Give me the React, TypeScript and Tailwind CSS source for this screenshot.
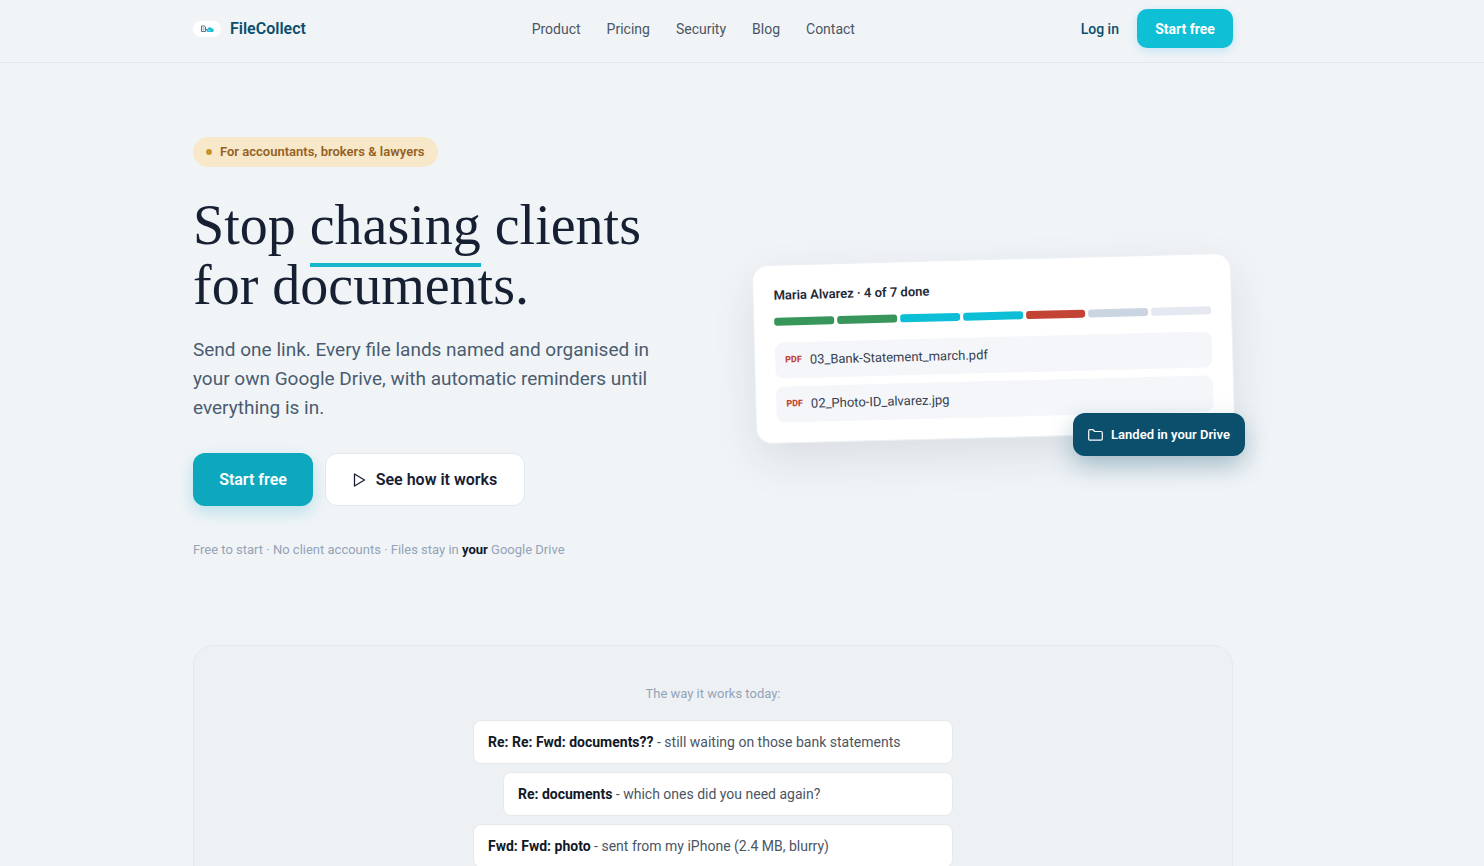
import React from 'react';

interface Email {
  subject: string;
  body: string;
  indent?: boolean;
}

const navLinks = ['Product', 'Pricing', 'Security', 'Blog', 'Contact'];

const segments = [
  'bg-[#38965a]',
  'bg-[#38965a]',
  'bg-[#0cbfd6]',
  'bg-[#0cbfd6]',
  'bg-[#c34434]',
  'bg-[#cbd5e1]',
  'bg-[#e5e7f1]',
];

const files = ['03_Bank-Statement_march.pdf', '02_Photo-ID_alvarez.jpg'];

const emails: Email[] = [
  { subject: 'Re: Re: Fwd: documents??', body: 'still waiting on those bank statements' },
  { subject: 'Re: documents', body: 'which ones did you need again?', indent: true },
  { subject: 'Fwd: Fwd: photo', body: 'sent from my iPhone (2.4 MB, blurry)' },
];

const Logo: React.FC = () => (
  <span className="flex h-4 w-7 items-center justify-center rounded-lg bg-white">
    <svg width="14" height="8" viewBox="0 0 14 8" fill="none">
      <path d="M1.500 1h3l1 1v4.500h-4z" stroke="#64748b" strokeWidth="1" />
      <path d="M2.500 3h2M2.500 4.800h2" stroke="#64748b" strokeWidth=".7" />
      <path d="M5.500 3.500l2 2" stroke="#475569" strokeWidth="1" />
      <path d="M7.500 7a1.600 1.600 0 0 1 0-3A2.400 2.400 0 0 1 12 3.600 1.700 1.700 0 0 1 12.300 7z" fill="#22bfd6" />
      <path d="M8.500 4.800l1.200 1.200" stroke="#fff" strokeWidth=".8" />
    </svg>
  </span>
);

const Header: React.FC = () => (
  <header className="border-b border-[#e2e8ec] pr-[58px]">
    <div className="mx-auto flex h-[62px] max-w-[1040px] items-center justify-between pb-[5px]">
      <a href="#" className="flex items-center gap-[9px] text-base font-semibold text-[#0b4f6c]">
        <Logo />
        FileCollect
      </a>
      <nav className="flex gap-[26px] text-sm text-[#4b5563]">
        {navLinks.map((link) => (
          <a key={link} href="#">{link}</a>
        ))}
      </nav>
      <div className="flex items-center gap-[18px] text-sm">
        <a href="#" className="font-medium text-[#0b4f6c]">Log in</a>
        <button className="h-[39px] w-24 rounded-[10px] bg-[#0ebfd6] font-bold text-white shadow-[0_3px_10px_rgba(14,165,233,0.2)]">
          Start free
        </button>
      </div>
    </div>
  </header>
);

const ProgressCard: React.FC = () => (
  <div className="relative">
    <div className="-rotate-[1.5deg] rounded-2xl border border-[#edf0f3] bg-white p-5 shadow-[0_16px_44px_rgba(15,40,60,0.1)]">
      <p className="text-[13px] leading-5 font-semibold text-[#1f2937]">Maria Alvarez · 4 of 7 done</p>
      <div className="mt-3 flex gap-[3px]">
        {segments.map((color, i) => (
          <span key={i} className={`h-2 flex-1 rounded-[3px] ${color}`} />
        ))}
      </div>
      <ul className="mt-[17px] flex flex-col gap-2">
        {files.map((file) => (
          <li key={file} className="flex h-9 items-center gap-2 rounded-lg bg-[#f4f6f9] px-[10px] text-[13px] text-[#374151]">
            <span className="text-[9px] font-extrabold text-[#c34434]">PDF</span>
            {file}
          </li>
        ))}
      </ul>
    </div>
    <div className="absolute -right-3 -bottom-[18px] flex h-[43px] w-[172px] items-center justify-center gap-2 rounded-xl bg-[#0b4f6c] text-[13px] font-semibold text-white shadow-[0_10px_24px_rgba(11,79,108,0.3)]">
      <svg width="15" height="12" viewBox="0 0 15 12" fill="none" stroke="currentColor" strokeWidth="1.200" strokeLinejoin="round">
        <path d="M.7 9.800V2c0-.8.5-1.300 1.300-1.300h3l1.600 1.800H13c.8 0 1.300.5 1.300 1.300v6c0 .8-.5 1.300-1.300 1.300H2C1.200 11.100.7 10.600.7 9.800z" />
      </svg>
      Landed in your Drive
    </div>
  </div>
);

const Hero: React.FC = () => (
  <section className="grid grid-cols-[1.07fr_1fr] items-center gap-12 pt-[74px] pb-[85px]">
    <div>
      <p className="inline-flex h-[30px] items-center gap-2 rounded-full bg-[#f8e8ca] px-[13px] text-[13px] font-semibold text-[#94601f]">
        <span className="size-[6px] rounded-full bg-[#c8922a]" />
        For accountants, brokers &amp; lawyers
      </p>
      <h1 className="mt-7 font-['Liberation_Serif',serif] text-[56px] leading-[60px] whitespace-nowrap text-[#172033]">
        Stop <span className="border-b-4 border-[#17b6cf] pb-[7px]">chasing</span> clients
        <br />
        for documents.
      </h1>
      <p className="mt-5 text-[19px] leading-[29px] text-[#4b5c70]">
        Send one link. Every file lands named and organised in
        <br />
        your own Google Drive, with automatic reminders until
        <br />
        everything is in.
      </p>
      <div className="mt-[31px] flex gap-3 text-base font-semibold">
        <button className="h-[53px] w-[120px] rounded-xl bg-[#0ea8be] text-white shadow-[0_6px_16px_rgba(14,168,190,0.25)]">
          Start free
        </button>
        <button className="flex h-[53px] w-[200px] items-center justify-center gap-[10px] rounded-xl border border-[#e2e8ec] bg-white text-[#172033]">
          <svg width="13" height="14" viewBox="0 0 13 14" fill="none" stroke="currentColor" strokeWidth="1.300" strokeLinejoin="round">
            <path d="M1.500 1v12L11.500 7z" />
          </svg>
          See how it works
        </button>
      </div>
      <p className="mt-[33px] text-[13px] leading-[21px] text-[#94a3b8]">
        Free to start · No client accounts · Files stay in <b className="text-[#111827]">your</b> Google Drive
      </p>
    </div>
    <ProgressCard />
  </section>
);

const TodaySection: React.FC = () => (
  <section className="rounded-[20px] border border-[#e4e9ec] bg-[#edf1f4] pt-[38px] pb-12">
    <p className="text-center text-[13px] leading-5 text-[#94a3b8]">The way it works today:</p>
    <ul className="mx-auto mt-4 flex max-w-[480px] flex-col gap-2 text-sm text-[#4b5563]">
      {emails.map(({ subject, body, indent }) => (
        <li
          key={subject}
          className={`flex h-11 items-center rounded-lg border border-[#e4e9ec] bg-white px-[14px] ${indent ? 'ml-[30px]' : ''}`}
        >
          <p><b className="text-[#111827]">{subject}</b> - {body}</p>
        </li>
      ))}
    </ul>
  </section>
);

const App: React.FC = () => {
  return (
    <div className="min-h-screen bg-[#f0f4f7] font-[Roboto,sans-serif]">
      <Header />
      <main className="pr-[58px]">
        <div className="mx-auto max-w-[1040px]">
          <Hero />
          <TodaySection />
        </div>
      </main>
    </div>
  );
};

export default App;
